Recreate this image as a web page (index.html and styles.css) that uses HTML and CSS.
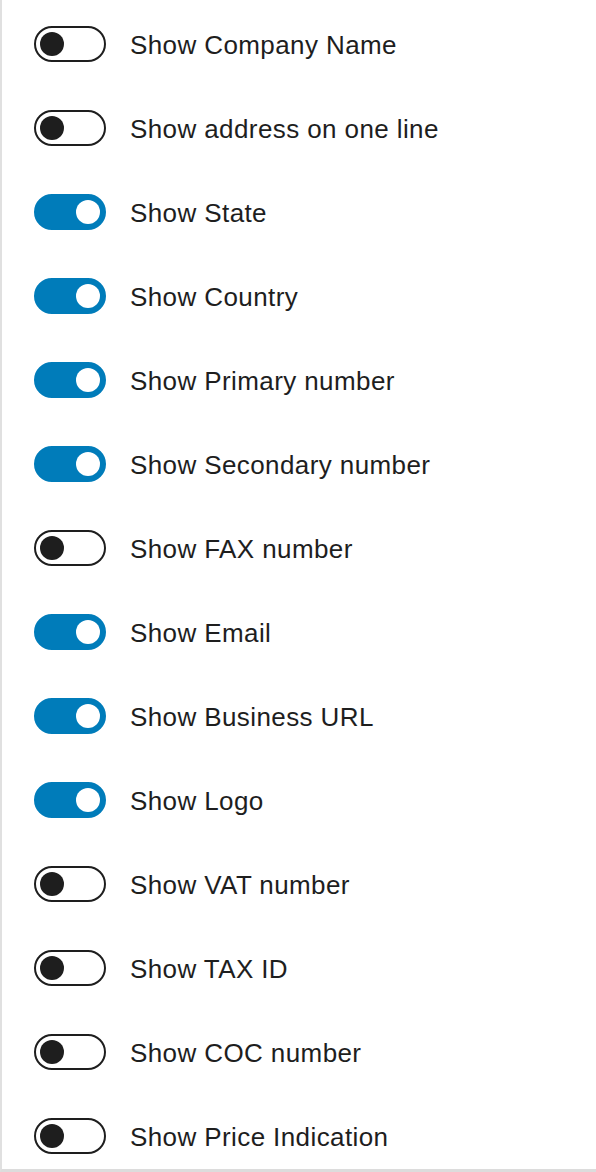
FILE: index.html
```html
<!DOCTYPE html>
<html lang="en">
<head>
  <meta charset="UTF-8" />
  <meta name="viewport" content="width=device-width, initial-scale=1.0" />
  <title>Address settings</title>
  <link rel="stylesheet" href="styles.css">
</head>
<body>
  <div class="panel">
    <label class="toggle-row"><span class="toggle"></span><span class="label">Show Company Name</span></label>
    <label class="toggle-row"><span class="toggle"></span><span class="label">Show address on one line</span></label>
    <label class="toggle-row"><span class="toggle is-on"></span><span class="label">Show State</span></label>
    <label class="toggle-row"><span class="toggle is-on"></span><span class="label">Show Country</span></label>
    <label class="toggle-row"><span class="toggle is-on"></span><span class="label">Show Primary number</span></label>
    <label class="toggle-row"><span class="toggle is-on"></span><span class="label">Show Secondary number</span></label>
    <label class="toggle-row"><span class="toggle"></span><span class="label">Show FAX number</span></label>
    <label class="toggle-row"><span class="toggle is-on"></span><span class="label">Show Email</span></label>
    <label class="toggle-row"><span class="toggle is-on"></span><span class="label">Show Business URL</span></label>
    <label class="toggle-row"><span class="toggle is-on"></span><span class="label">Show Logo</span></label>
    <label class="toggle-row"><span class="toggle"></span><span class="label">Show VAT number</span></label>
    <label class="toggle-row"><span class="toggle"></span><span class="label">Show TAX ID</span></label>
    <label class="toggle-row"><span class="toggle"></span><span class="label">Show COC number</span></label>
    <label class="toggle-row"><span class="toggle"></span><span class="label">Show Price Indication</span></label>
  </div>
</body>
</html>
```

FILE: styles.css
```css
body { margin: 0; font-family: "Liberation Sans", Arial, sans-serif; color: #1e1e1e; background: #fff; }
.panel { display: flex; flex-direction: column; gap: 48px; padding: 26px 0 15px 32px; border-left: 2px solid #e0e0e0; border-bottom: 3px solid #dcdcdc; height: 1128px; }
.toggle-row { display: flex; align-items: center; gap: 24px; height: 36px; }
.toggle { position: relative; box-sizing: border-box; width: 72px; height: 36px; border: 2px solid #1e1e1e; border-radius: 18px; background: #fff; flex-shrink: 0; }
.toggle::after { content: ""; position: absolute; top: 4px; left: 4px; width: 24px; height: 24px; border-radius: 50%; background: #1e1e1e; }
.toggle.is-on { background: #007cba; border-color: #007cba; }
.toggle.is-on::after { left: 40px; background: #fff; }
.label { font-size: 26px; line-height: 36px; padding-top: 2px; letter-spacing: 0.4px; }
```
